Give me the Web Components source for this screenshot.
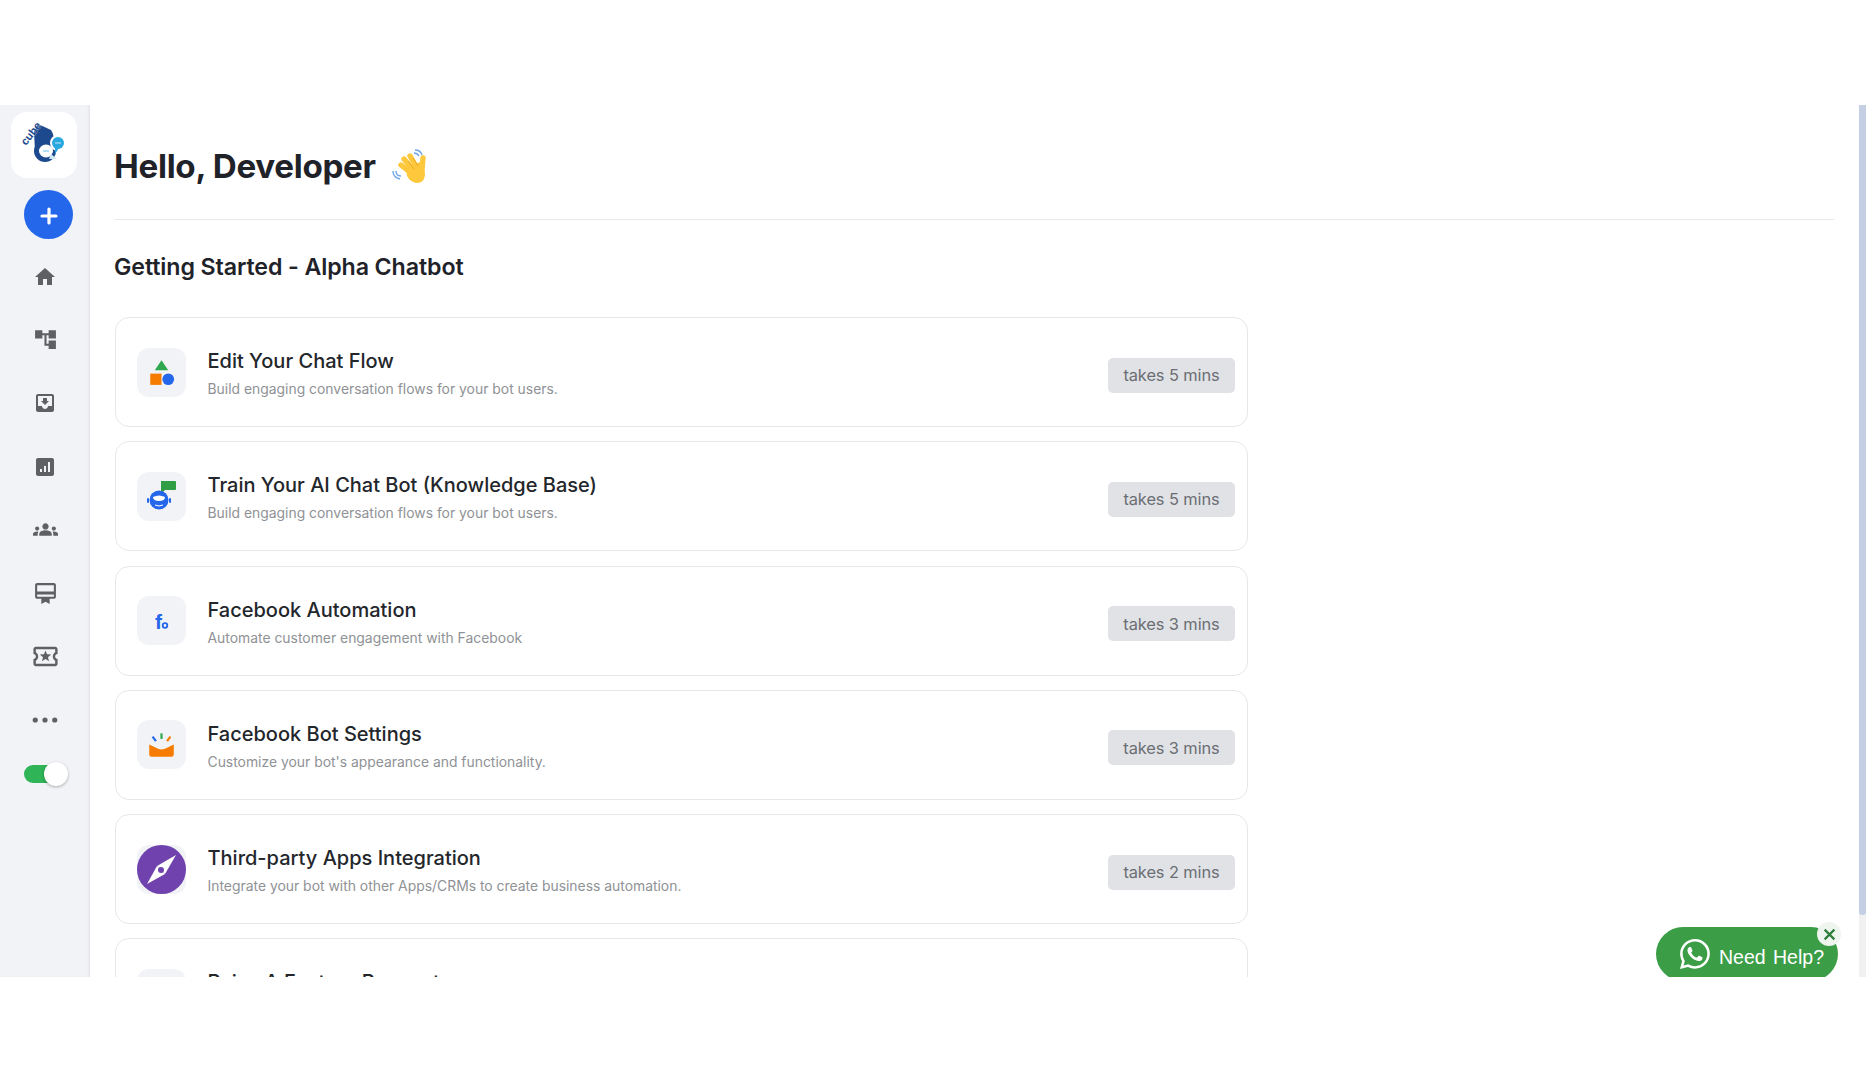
<!DOCTYPE html>
<html>
<head>
<meta charset="utf-8">
<title>Getting Started</title>
<style>
  html, body { margin: 0; padding: 0; background: #fff; }
  body { font-family: "Inter", "Liberation Sans", sans-serif; overflow: hidden; }
</style>
</head>
<body>
<app-shell>
  <side-bar slot="side"></side-bar>
  <start-page slot="main" greeting="Hello, Developer" section="Getting Started - Alpha Chatbot">
    <task-card title-text="Edit Your Chat Flow" sub="Build engaging conversation flows for your bot users." mins="5" kind="shapes"></task-card>
    <task-card title-text="Train Your AI Chat Bot (Knowledge Base)" sub="Build engaging conversation flows for your bot users." mins="5" kind="bot"></task-card>
    <task-card title-text="Facebook Automation" sub="Automate customer engagement with Facebook" mins="3" kind="fb"></task-card>
    <task-card title-text="Facebook Bot Settings" sub="Customize your bot's appearance and functionality." mins="3" kind="box"></task-card>
    <task-card title-text="Third-party Apps Integration" sub="Integrate your bot with other Apps/CRMs to create business automation." mins="2" kind="compass"></task-card>
    <task-card title-text="Raise A Feature Request" kind="none"></task-card>
  </start-page>
  <help-button slot="over"></help-button>
</app-shell>

<script>
class AppShell extends HTMLElement {
    connectedCallback() {
        this.attachShadow({ mode: 'open' });
        this.shadowRoot.innerHTML = `
            <style>
                :host {
                    display: flex;
                    position: relative;
                    margin-top: 105px;
                    height: 872px;
                    overflow: hidden;
                    background: #fff;
                }
                .main {
                    flex: 1;
                    min-width: 0;
                    overflow: hidden;
                }
                .scroll {
                    width: 7px;
                    background: #f1f1f1;
                }
                .thumb {
                    height: 810px;
                    background: #c5cfe3;
                    border-radius: 0 0 3px 3px;
                }
            </style>
            <slot name="side"></slot>
            <div class="main"><slot name="main"></slot></div>
            <div class="scroll"><div class="thumb"></div></div>
            <slot name="over"></slot>
        `;
    }
}

// size is the rendered px of the 24 unit viewBox, the glyphs do not all fill it
const NAV_ICONS = {
    home: [24, '<path d="M10 20v-6h4v6h5v-8h3L12 3 2 12h3v8z"/>'],
    flow: [25, '<path d="M22 11V3h-7v3H9V3H2v8h7V8h2v10h4v3h7v-8h-7v3h-2V8h2v3z"/>'],
    inbox: [24, '<path d="M19 3H5c-1.1 0-2 .9-2 2v14c0 1.1.9 2 2 2h14c1.1 0 2-.9 2-2V5c0-1.1-.9-2-2-2zm0 12h-4c0 1.66-1.34 3-3 3s-3-1.34-3-3H5V5h14v10zm-3-5h-2V7h-4v3H8l4 4 4-4z"/>'],
    chart: [24, '<path d="M19 3H5c-1.1 0-2 .9-2 2v14c0 1.1.9 2 2 2h14c1.1 0 2-.9 2-2V5c0-1.1-.9-2-2-2zM9 17H7v-3h2v3zm4 0h-2v-6h2v6zm4 0h-2V7h2v10z"/>'],
    team: [25, '<path d="M12 12.75c1.63 0 3.07.39 4.24.9 1.08.48 1.76 1.56 1.76 2.73V18H6v-1.61c0-1.18.68-2.26 1.76-2.73 1.17-.52 2.61-.91 4.24-.91zM4 13c1.1 0 2-.9 2-2s-.9-2-2-2-2 .9-2 2 .9 2 2 2zm1.13 1.1c-.37-.06-.74-.1-1.13-.1-.99 0-1.93.21-2.78.58C.48 14.9 0 15.62 0 16.43V18h4.5v-1.61c0-.83.23-1.61.63-2.29zM20 13c1.1 0 2-.9 2-2s-.9-2-2-2-2 .9-2 2 .9 2 2 2zm4 3.43c0-.81-.48-1.53-1.22-1.85-.85-.37-1.79-.58-2.78-.58-.39 0-.76.04-1.13.1.4.68.63 1.46.63 2.29V18H24v-1.57zM12 6c1.66 0 3 1.34 3 3s-1.34 3-3 3-3-1.34-3-3 1.34-3 3-3z"/>'],
    card: [25, '<path d="M20 2H4c-1.11 0-2 .89-2 2v11c0 1.11.89 2 2 2h4v5l4-2 4 2v-5h4c1.11 0 2-.89 2-2V4c0-1.11-.89-2-2-2zm0 13H4v-2h16v2zm0-5H4V4h16v6z"/>'],
    ticket: [29, '<path d="M22 10V6c0-1.11-.9-2-2-2H4c-1.1 0-1.99.89-1.99 2v4c1.1 0 1.99.9 1.99 2s-.89 2-2 2v4c0 1.1.9 2 2 2h16c1.1 0 2-.9 2-2v-4c-1.1 0-2-.9-2-2s.9-2 2-2zm-2-1.46c-1.19.69-2 1.99-2 3.46s.81 2.77 2 3.46V18H4v-2.54c1.19-.69 2-1.99 2-3.46 0-1.48-.8-2.77-1.99-3.46L4 6h16v2.54zM9.07 16L12 14.12 14.93 16l-.89-3.36 2.69-2.2-3.47-.21L12 7l-1.27 3.22-3.47.21 2.69 2.2z"/>'],
    dots: [26, '<circle cx="3" cy="12" r="2.4"/><circle cx="12" cy="12" r="2.4"/><circle cx="21" cy="12" r="2.4"/>']
};

class SideBar extends HTMLElement {
    connectedCallback() {
        const rows = Object.values(NAV_ICONS).map(([size, glyph]) => `
            <div class="row"><svg viewBox="0 0 24 24" width="${size}" height="${size}" fill="#5f6063">${glyph}</svg></div>
        `).join('');

        this.attachShadow({ mode: 'open' });
        this.shadowRoot.innerHTML = `
            <style>
                :host {
                    display: flex;
                    flex-direction: column;
                    flex: none;
                    width: 90px;
                    height: 100%;
                    background: #f1f3f6;
                    box-shadow: inset -3px 0 3px -2px #dfe1e5;
                    box-sizing: border-box;
                    padding-top: 7px;
                }
                .logo {
                    width: 66px;
                    height: 66px;
                    margin-left: 11px;
                    background: #fff;
                    border-radius: 16px;
                    display: flex;
                    align-items: center;
                    justify-content: center;
                }
                .logo svg {
                    overflow: visible;
                }
                .plus {
                    width: 49px;
                    height: 49px;
                    margin: 12px 0 6px 24px;
                    border-radius: 50%;
                    background: #2567eb;
                    display: flex;
                    align-items: center;
                    justify-content: center;
                }
                .plus svg {
                    margin-top: 3px;
                }
                .row {
                    width: 90px;
                    height: 63.3px;
                    display: flex;
                    align-items: center;
                    justify-content: center;
                }
                .toggle {
                    position: relative;
                    width: 44px;
                    height: 18px;
                    margin: 14px 0 0 24px;
                }
                .track {
                    width: 32px;
                    height: 18px;
                    border-radius: 9px;
                    background: #2fb457;
                }
                .knob {
                    position: absolute;
                    right: 0;
                    top: -3px;
                    width: 24px;
                    height: 24px;
                    border-radius: 50%;
                    background: #fff;
                    box-shadow: 0 1px 3px rgba(0, 0, 0, 0.3);
                }
            </style>
            <div class="logo">
                <svg width="44" height="44" viewBox="0 0 44 44">
                    <path d="M16 1 L29 7 Q33 13 31 20 L13 28 L12 9 Z" fill="#1d4a8e"/>
                    <circle cx="23" cy="28" r="11" fill="#1d4a8e"/>
                    <text transform="translate(4 23) rotate(-52)" font-family="Liberation Sans, sans-serif" font-weight="700" font-size="11" fill="#1d4a8e" stroke="#fff" stroke-width="0.4" paint-order="stroke">cube</text>
                    <circle cx="36" cy="20" r="8" fill="#fff"/>
                    <ellipse cx="24" cy="28" rx="7" ry="6.5" fill="#fff"/>
                    <path d="M29 31 L35 36 L27 36 Z" fill="#cfe6f5"/>
                    <circle cx="36" cy="20" r="6" fill="#29a8e0"/>
                    <path d="M33 24 L33 31 L37 25 Z" fill="#29a8e0"/>
                    <circle cx="34" cy="20" r=".7" fill="#fff"/><circle cx="36" cy="20" r=".7" fill="#fff"/><circle cx="38" cy="20" r=".7" fill="#fff"/>
                    <circle cx="22" cy="28" r=".7" fill="#29a8e0"/><circle cx="24" cy="28" r=".7" fill="#29a8e0"/><circle cx="26" cy="28" r=".7" fill="#29a8e0"/>
                </svg>
            </div>
            <div class="plus">
                <svg width="20" height="20" viewBox="0 0 20 20"><path d="M10 3v14M3 10h14" stroke="#fff" stroke-width="3.2" stroke-linecap="round"/></svg>
            </div>
            ${rows}
            <div class="toggle"><div class="track"></div><div class="knob"></div></div>
        `;
    }
}

class StartPage extends HTMLElement {
    connectedCallback() {
        const greeting = this.getAttribute('greeting');
        const section = this.getAttribute('section');

        this.attachShadow({ mode: 'open' });
        this.shadowRoot.innerHTML = `
            <style>
                :host {
                    display: block;
                    padding: 0 25px 0 24px;
                    color: #1f2329;
                }
                header {
                    display: flex;
                    align-items: center;
                    gap: 15px;
                    height: 115px;
                    padding-top: 10px;
                    box-sizing: border-box;
                    border-bottom: 1px solid #e9eaec;
                }
                h1 {
                    margin: 0;
                    font-size: 33.2px;
                    font-weight: 700;
                    letter-spacing: -0.3px;
                    line-height: 1;
                }
                h2 {
                    margin: 0;
                    height: 97px;
                    padding-bottom: 3px;
                    box-sizing: border-box;
                    display: flex;
                    align-items: center;
                    font-size: 23.2px;
                    font-weight: 600;
                    letter-spacing: -0.1px;
                }
                .list {
                    display: flex;
                    flex-direction: column;
                    gap: 14.3px;
                    width: 1133px;
                    margin-left: 1px;
                }
            </style>
            <header>
                <h1>${greeting}</h1>
                <svg width="38" height="38" viewBox="0 0 38 38">
                    <g stroke="#fdc83c" stroke-width="5.4" stroke-linecap="round" fill="none">
                        <path d="M10 17 L20 25"/>
                        <path d="M13 11 L22 22"/>
                        <path d="M19 8 L26 20"/>
                        <path d="M32 10 L31 22"/>
                    </g>
                    <path d="M15 20 L29 14 Q34 20 34 27 Q33 35 26 35 Q20 35 16 28 Z" fill="#fdc83c"/>
                    <path d="M17 13 L23 21 M22 10 L27 18" stroke="#e8a020" stroke-width=".8" fill="none"/>
                    <path d="M24 2 C27 2 30 4 31 7 M23 5 C25 5 27 6 28 8" stroke="#6ea6e6" stroke-width="1.4" fill="none"/>
                    <path d="M2 23 C2 27 5 30 9 31 M5 23 C5 26 7 28 10 28" stroke="#6ea6e6" stroke-width="1.4" fill="none"/>
                </svg>
            </header>
            <h2>${section}</h2>
            <div class="list"><slot></slot></div>
        `;
    }
}

const CARD_ICONS = {
    shapes: `<svg width="27" height="27" viewBox="0 0 24 24">
        <path d="M12 1 L18 10 H6 Z" fill="#2fa84f"/>
        <rect x="2" y="13" width="10" height="10" fill="#f57c00"/>
        <circle cx="18" cy="18" r="5.2" fill="#2567eb"/>
    </svg>`,
    bot: `<svg width="32" height="32" viewBox="0 0 32 32">
        <path d="M15 1 H29 Q30 1 30 2 V9 Q30 10 29 10 H19 L15 14 Z" fill="#2f9e44"/>
        <circle cx="13" cy="20" r="9.5" fill="#2567eb"/>
        <rect x="1" y="18" width="2" height="5" rx="1" fill="#2567eb"/>
        <rect x="23" y="18" width="2" height="5" rx="1" fill="#2567eb"/>
        <path d="M7 17 Q13 14 19 17 Q19 21 13 21 Q7 21 7 17Z" fill="#fff"/>
        <path d="M9 25 Q13 27 17 25" stroke="#fff" stroke-width="1" fill="none"/>
    </svg>`,
    fb: `<svg width="26" height="26" viewBox="0 0 26 26">
        <text x="6" y="21" font-family="Liberation Sans, sans-serif" font-weight="700" font-size="21" fill="#2567eb">f</text>
        <circle cx="16" cy="17.5" r="2.3" fill="none" stroke="#2567eb" stroke-width="1.8"/>
    </svg>`,
    box: `<svg width="29" height="29" viewBox="0 0 26 26">
        <path d="M2 13 L8 16 Q13 19 18 16 L24 13 V22 Q24 24 22 24 H4 Q2 24 2 22 Z" fill="#f57c00"/>
        <path d="M13 3 V8" stroke="#2fa84f" stroke-width="2"/>
        <path d="M5 6 L8 10" stroke="#2567eb" stroke-width="2"/>
        <path d="M21 6 L18 10" stroke="#f57c00" stroke-width="2"/>
    </svg>`,
    compass: `<svg width="49" height="49" viewBox="0 0 49 49">
        <circle cx="24.5" cy="24.5" r="24.5" fill="#6f42ad"/>
        <path d="M39 10 L28 29 L20 21 Z" fill="#fff"/>
        <path d="M10 39 L20 21 L28 29 Z" fill="#fff"/>
        <circle cx="24" cy="25" r="3" fill="#6f42ad"/>
    </svg>`,
    none: ''
};

class TaskCard extends HTMLElement {
    connectedCallback() {
        const titleText = this.getAttribute('title-text');
        const sub = this.getAttribute('sub') || '';
        const mins = this.getAttribute('mins');
        const kind = this.getAttribute('kind');

        this.attachShadow({ mode: 'open' });
        this.shadowRoot.innerHTML = `
            <style>
                :host {
                    display: flex;
                    align-items: center;
                    flex: none;
                    height: 110px;
                    box-sizing: border-box;
                    padding: 0 12px 0 21px;
                    background: #fff;
                    border: 1px solid #e6e7ea;
                    border-radius: 14px;
                }
                .icon {
                    flex: none;
                    width: 49px;
                    height: 49px;
                    border-radius: 12px;
                    background: #f1f3f6;
                    display: flex;
                    align-items: center;
                    justify-content: center;
                }
                .text {
                    flex: 1;
                    margin-left: 21.5px;
                    padding-top: 5px;
                    min-width: 0;
                }
                .name {
                    font-size: 20px;
                    font-weight: 500;
                    line-height: 24px;
                    color: #23262b;
                }
                .sub {
                    margin-top: 5px;
                    min-height: 22px;
                    font-size: 13.9px;
                    line-height: 22px;
                    color: #8f9296;
                }
                .badge {
                    flex: none;
                    margin-top: 6px;
                    width: 127px;
                    height: 35px;
                    border-radius: 5px;
                    background: #e0e2e6;
                    color: #6b6e73;
                    font-size: 16.4px;
                    letter-spacing: -0.1px;
                    display: flex;
                    align-items: center;
                    justify-content: center;
                }
            </style>
            <div class="icon">${CARD_ICONS[kind]}</div>
            <div class="text">
                <div class="name">${titleText}</div>
                <div class="sub">${sub}</div>
            </div>
            ${mins ? `<div class="badge">takes ${mins} mins</div>` : ''}
        `;
    }
}

class HelpButton extends HTMLElement {
    connectedCallback() {
        this.attachShadow({ mode: 'open' });
        this.shadowRoot.innerHTML = `
            <style>
                :host {
                    position: absolute;
                    left: 1656px;
                    top: 822px;
                    width: 182px;
                    height: 54px;
                    box-sizing: border-box;
                    padding-left: 24px;
                    display: flex;
                    align-items: center;
                    gap: 9px;
                    border-radius: 27px;
                    background: #3c9d47;
                    color: #fff;
                    font-family: "Liberation Sans", sans-serif;
                    font-size: 19.5px;
                    word-spacing: 2px;
                }
                span {
                    margin-top: 6px;
                }
                .close {
                    position: absolute;
                    right: -3px;
                    top: -5px;
                    width: 24px;
                    height: 24px;
                    border-radius: 50%;
                    background: #eef4ee;
                    display: flex;
                    align-items: center;
                    justify-content: center;
                }
            </style>
            <svg width="30" height="30" viewBox="0 0 16 16" fill="#fff"><path d="M13.601 2.326A7.854 7.854 0 0 0 7.994 0C3.627 0 .068 3.558.064 7.926c0 1.399.366 2.76 1.057 3.965L0 16l4.204-1.102a7.933 7.933 0 0 0 3.79.965h.004c4.368 0 7.926-3.558 7.93-7.93A7.898 7.898 0 0 0 13.6 2.326zM7.994 14.521a6.573 6.573 0 0 1-3.356-.92l-.24-.144-2.494.654.666-2.433-.156-.251a6.56 6.56 0 0 1-1.007-3.505c0-3.626 2.957-6.584 6.591-6.584a6.56 6.56 0 0 1 4.66 1.931 6.557 6.557 0 0 1 1.928 4.66c-.004 3.639-2.961 6.592-6.592 6.592zm3.615-4.934c-.197-.099-1.17-.578-1.353-.646-.182-.065-.315-.099-.445.099-.133.197-.513.646-.627.775-.114.133-.232.148-.43.05-.197-.1-.836-.308-1.592-.985-.59-.525-.985-1.175-1.103-1.372-.114-.198-.011-.304.088-.403.087-.088.197-.232.296-.346.1-.114.133-.198.198-.33.065-.134.034-.248-.015-.347-.05-.099-.445-1.076-.612-1.47-.16-.389-.323-.335-.445-.34-.114-.007-.247-.007-.38-.007a.729.729 0 0 0-.529.247c-.182.198-.691.677-.691 1.654 0 .977.71 1.916.81 2.049.098.133 1.394 2.132 3.383 2.992.47.205.84.326 1.129.418.475.152.904.129 1.246.08.38-.058 1.171-.48 1.338-.943.164-.464.164-.86.114-.943-.049-.084-.182-.133-.38-.232z"/></svg>
            <span>Need Help?</span>
            <div class="close"><svg width="13" height="13" viewBox="0 0 12 12"><path d="M1.5 1.5l9 9M10.5 1.5l-9 9" stroke="#2e7d3a" stroke-width="2"/></svg></div>
        `;
    }
}

customElements.define('app-shell', AppShell);
customElements.define('side-bar', SideBar);
customElements.define('start-page', StartPage);
customElements.define('task-card', TaskCard);
customElements.define('help-button', HelpButton);
</script>
</body>
</html>
